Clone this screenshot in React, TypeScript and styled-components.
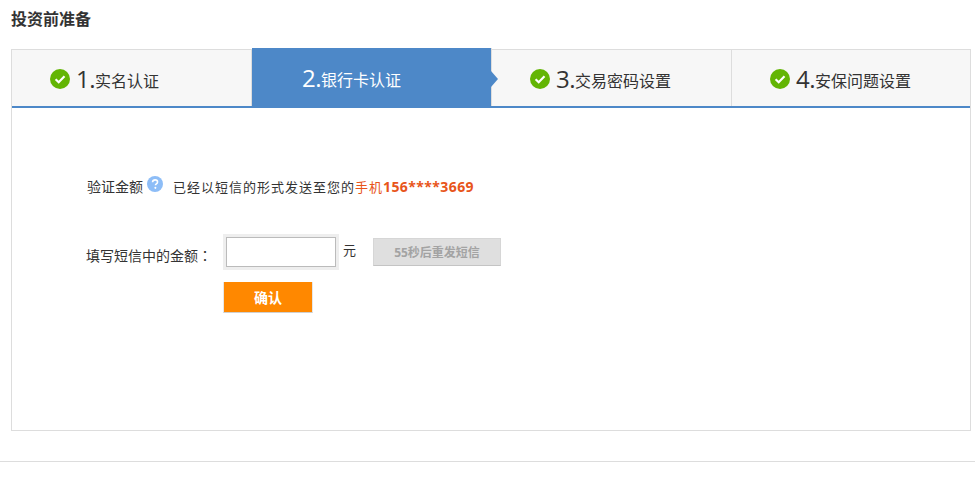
import React from 'react'
import styled, {createGlobalStyle} from 'styled-components'

const GlobalStyle = createGlobalStyle`
    html, body {
        margin: 0;
        padding: 0;
        background: #ffffff;
        font-family: "Open Sans", "Noto Sans CJK SC", sans-serif;
        color: #333333;
    }
`

const Page = styled.div`
    width: 975px;
    height: 485px;
    overflow: hidden;
    box-sizing: border-box;
    padding-top: 8px;
`

const Title = styled.h2`
    margin: 0 0 0 11px;
    height: 41px;
    font-size: 16px;
    line-height: 23px;
    font-weight: 700;
    color: #333333;
`

const Panel = styled.div`
    box-sizing: border-box;
    width: 960px;
    height: 382px;
    margin-left: 11px;
    border: 1px solid #dddddd;
    background: #ffffff;
`

const Steps = styled.div`
    display: flex;
    height: 58px;
    box-sizing: border-box;
    border-bottom: 2px solid #4d88c8;
    background: #f7f7f7;
`

const Step = styled.div<{$active?: boolean}>`
    position: relative;
    box-sizing: border-box;
    flex: none;
    width: 240px;
    height: ${p => (p.$active ? '58px' : '56px')};
    margin-top: ${p => (p.$active ? '-2px' : '0')};
    padding: ${p => (p.$active ? '2px 0 0 50px' : '1px 0 0 38px')};
    display: flex;
    align-items: center;
    background: ${p => (p.$active ? '#4d88c8' : 'transparent')};
    background-clip: padding-box;
    color: ${p => (p.$active ? '#ffffff' : '#333333')};
    border-right: 1px solid #dddddd;
    &:last-child {
        width: 238px;
        border-right: none;
    }
`

const Arrow = styled.span`
    position: absolute;
    right: -7px;
    top: 23px;
    width: 0;
    height: 0;
    border-style: solid;
    border-width: 8px 0 8px 7px;
    border-color: transparent transparent transparent #4d88c8;
`

const CheckIcon = styled.svg`
    width: 20px;
    height: 20px;
    margin-right: 6px;
    flex: none;
`

const StepNumber = styled.span`
    font-size: 24px;
    line-height: 30px;
    letter-spacing: -0.5px;
    font-family: "Open Sans", sans-serif;
`

const StepLabel = styled.span`
    font-size: 16px;
    line-height: 30px;
    position: relative;
    top: 2px;
`

const Body = styled.div`
    padding: 66px 0 0 75px;
`

const InfoRow = styled.div`
    display: flex;
    align-items: center;
    height: 24px;
    font-size: 13px;
    color: #333333;
    margin-bottom: 36px;
`

const InfoLabel = styled.span`
    width: 56px;
    font-size: 14px;
    white-space: nowrap;
`

const HelpIcon = styled.svg`
    width: 16px;
    height: 16px;
    margin: -4px 10px 0 4px;
    flex: none;
`

const InfoText = styled.span`
    font-size: 13px;
    letter-spacing: 1px;
    white-space: nowrap;
`

const Phone = styled.span`
    color: #e8551a;
    font-size: 13px;
    letter-spacing: 1px;
`

const PhoneNumber = styled.b`
    font-size: 14px;
    letter-spacing: 0.4px;
`

const FormGrid = styled.div`
    display: grid;
    grid-template-columns: 137px auto;
    grid-auto-rows: auto;
    row-gap: 12px;
    margin-left: -1px;
`

const FieldLabel = styled.label`
    display: block;
    box-sizing: border-box;
    height: 36px;
    font-size: 14px;
    line-height: 40px;
    padding-top: 1px;
    white-space: nowrap;
`

const Colon = styled.span`
    font-family: "Noto Sans CJK TC", sans-serif;
`

const Field = styled.div`
    display: flex;
    align-items: flex-start;
`

const InputWrap = styled.div`
    box-sizing: border-box;
    width: 116px;
    height: 36px;
    padding: 3px;
    background: #eeeeee;
`

const AmountInput = styled.input`
    display: block;
    box-sizing: border-box;
    width: 110px;
    height: 30px;
    margin: 0;
    border: 1px solid #bbbbbb;
    background: #ffffff;
    outline: none;
`

const Unit = styled.span`
    font-size: 13px;
    line-height: 20px;
    margin: 6px 17px 0 4px;
`

const ResendButton = styled.button`
    box-sizing: border-box;
    width: 128px;
    height: 28px;
    margin-top: 4px;
    padding: 0;
    border: 1px solid #d6d6d6;
    border-bottom: 1px solid #c4c4c4;
    background: #dfdfdf;
    color: #a3a3a3;
    font-family: inherit;
    font-size: 12px;
    font-weight: 700;
`

const ConfirmButton = styled.button`
    grid-column: 2;
    box-sizing: border-box;
    width: 90px;
    height: 31px;
    padding: 0;
    border: 1px solid #e6e6e6;
    border-top: none;
    border-bottom-color: #cfcfcf;
    background: #ff8800;
    color: #ffffff;
    font-family: inherit;
    font-size: 14px;
    font-weight: 700;
`

const Footer = styled.div`
    height: 1px;
    margin-top: 30px;
    background: #dddddd;
`

const Check: React.FC = () => (
    <CheckIcon viewBox="0 0 20 20">
        <circle cx="10" cy="10" r="10" fill="#63b504" />
        <path d="M5.6 10.2l3.1 3 5.8-5.9" fill="none" stroke="#ffffff" strokeWidth="2.2" />
    </CheckIcon>
)

const steps = [
    {num: '1.', label: '实名认证', done: true},
    {num: '2.', label: '银行卡认证', active: true},
    {num: '3.', label: '交易密码设置', done: true},
    {num: '4.', label: '安保问题设置', done: true},
]

const App: React.FC = () => {
    return (
        <Page>
            <GlobalStyle />
            <Title>投资前准备</Title>
            <Panel>
                <Steps>
                    {steps.map(s => (
                        <Step key={s.num} $active={s.active}>
                            {s.done && <Check />}
                            <StepNumber>{s.num}</StepNumber>
                            <StepLabel>{s.label}</StepLabel>
                            {s.active && <Arrow />}
                        </Step>
                    ))}
                </Steps>
                <Body>
                    <InfoRow>
                        <InfoLabel>验证金额</InfoLabel>
                        <HelpIcon viewBox="0 0 17 17">
                            <circle cx="8.5" cy="8.5" r="8.5" fill="#8dbdf7" />
                            <path
                                d="M5.9 6.6c0-1.6 1.1-2.5 2.7-2.5s2.6.9 2.6 2.2c0 1-.5 1.5-1.3 2-.7.5-.9.8-.9 1.6"
                                fill="none"
                                stroke="#ffffff"
                                strokeWidth="1.7"
                            />
                            <circle cx="8.9" cy="12.6" r="1.1" fill="#ffffff" />
                        </HelpIcon>
                        <InfoText>已经以短信的形式发送至您的</InfoText>
                        <Phone>
                            手机<PhoneNumber>156****3669</PhoneNumber>
                        </Phone>
                    </InfoRow>
                    <FormGrid>
                        <FieldLabel>
                            填写短信中的金额<Colon>：</Colon>
                        </FieldLabel>
                        <Field>
                            <InputWrap>
                                <AmountInput type="text" />
                            </InputWrap>
                            <Unit>元</Unit>
                            <ResendButton type="button">55秒后重发短信</ResendButton>
                        </Field>
                        <ConfirmButton type="button">确认</ConfirmButton>
                    </FormGrid>
                </Body>
            </Panel>
            <Footer />
        </Page>
    )
}

export default App
